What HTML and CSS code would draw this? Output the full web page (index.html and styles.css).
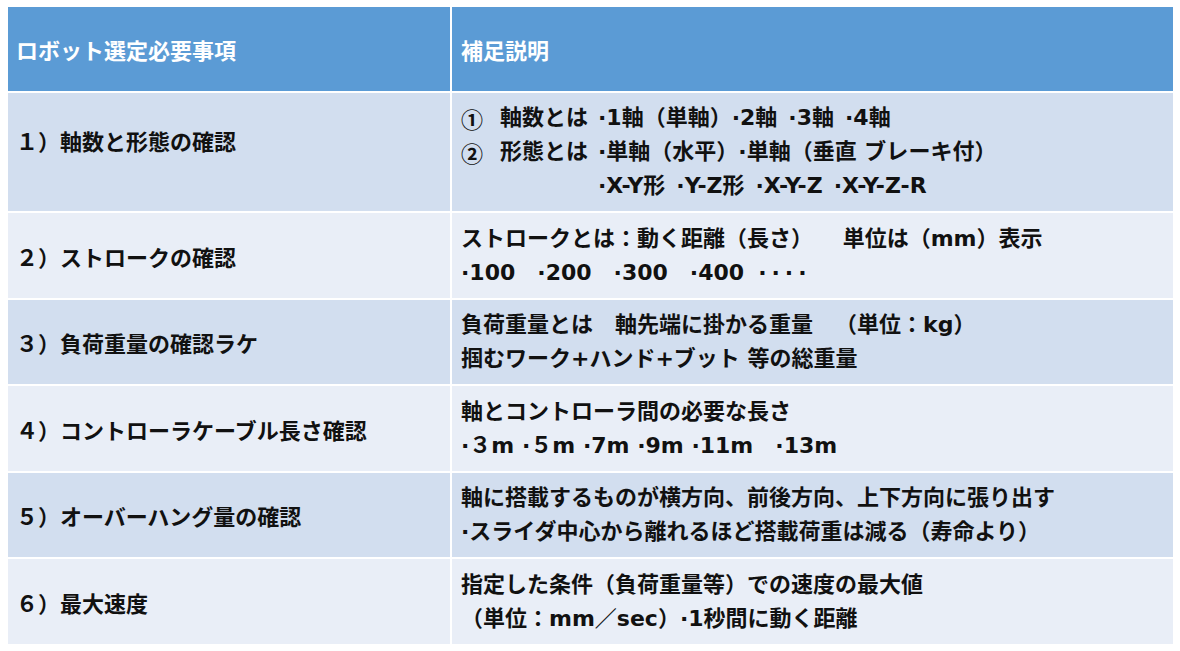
FILE: index.html
```html
<!DOCTYPE html>
<html lang="ja">
<head>
<meta charset="utf-8">
<title>ロボット選定必要事項</title>
<link rel="stylesheet" href="styles.css">
</head>
<body>
<div class="sheet">
  <div class="cell head left">ロボット選定必要事項</div>
  <div class="cell head right">補足説明</div>

  <div class="cell odd left first">１）軸数と形態の確認</div>
  <div class="cell odd right">
    <div class="defs">
      <span class="circ">①</span><span>軸数とは</span><span>·1軸（単軸）·2軸&ensp;·3軸&ensp;·4軸</span>
      <span class="circ">②</span><span>形態とは</span><span>·単軸（水平）·単軸（垂直 ブレーキ付）</span>
      <span class="full">·X-Y形&ensp;·Y-Z形&ensp;·X-Y-Z&ensp;·X-Y-Z-R</span>
    </div>
  </div>

  <div class="cell even left">２）ストロークの確認</div>
  <div class="cell even right">
    <div class="line">ストロークとは：動く距離（長さ）　 単位は（mm）表示</div>
    <div class="line">·100　·200　·300　·400<span class="dots">····</span></div>
  </div>

  <div class="cell odd left">３）負荷重量の確認ラケ</div>
  <div class="cell odd right">
    <div class="line">負荷重量とは　軸先端に掛かる重量　（単位：kg）</div>
    <div class="line">掴むワーク+ハンド+ブット 等の総重量</div>
  </div>

  <div class="cell even left">４）コントローラケーブル長さ確認</div>
  <div class="cell even right">
    <div class="line">軸とコントローラ間の必要な長さ</div>
    <div class="line">·３m ·５m ·7m ·9m ·11m　·13m</div>
  </div>

  <div class="cell odd left">５）オーバーハング量の確認</div>
  <div class="cell odd right">
    <div class="line">軸に搭載するものが横方向、前後方向、上下方向に張り出す</div>
    <div class="line">·スライダ中心から離れるほど搭載荷重は減る（寿命より）</div>
  </div>

  <div class="cell even left">６）最大速度</div>
  <div class="cell even right">
    <div class="line">指定した条件（負荷重量等）での速度の最大値</div>
    <div class="line">（単位：mm／sec）·1秒間に動く距離</div>
  </div>
</div>
</body>
</html>
```

FILE: styles.css
```css
html, body {
  margin: 0;
  padding: 0;
  background: #ffffff;
}

body {
  font-family: "DejaVu Sans", "Noto Sans CJK JP", sans-serif;
  font-weight: bold;
  font-size: 22px;
  color: #111111;
  text-spacing-trim: space-all;
}

.sheet {
  display: grid;
  grid-template-columns: 442px 721px;
  grid-template-rows: 84px 118px 85px 84px 85px 84px 85px;
  gap: 2px;
  margin: 7px 0 0 8px;
  width: 1165px;
}

.cell {
  display: flex;
  flex-direction: column;
  justify-content: center;
  box-sizing: border-box;
  white-space: nowrap;
}

.cell.left {
  padding-left: 8px;
}

.cell.right {
  padding-left: 9px;
}

.cell.first {
  padding-bottom: 24px;
}

.head {
  background: #5b9bd5;
  color: #ffffff;
}

.odd {
  background: #d2deef;
}

.even {
  background: #e9eef7;
}

.line {
  line-height: 34px;
}

.defs {
  display: grid;
  grid-template-columns: 39px 98px auto;
  line-height: 34px;
}

.defs .circ {
  font-family: "Noto Sans CJK JP", sans-serif;
  font-weight: bold;
}

.defs .full {
  grid-column: 3;
}

.dots {
  margin-left: 14px;
  letter-spacing: 5px;
}
```
